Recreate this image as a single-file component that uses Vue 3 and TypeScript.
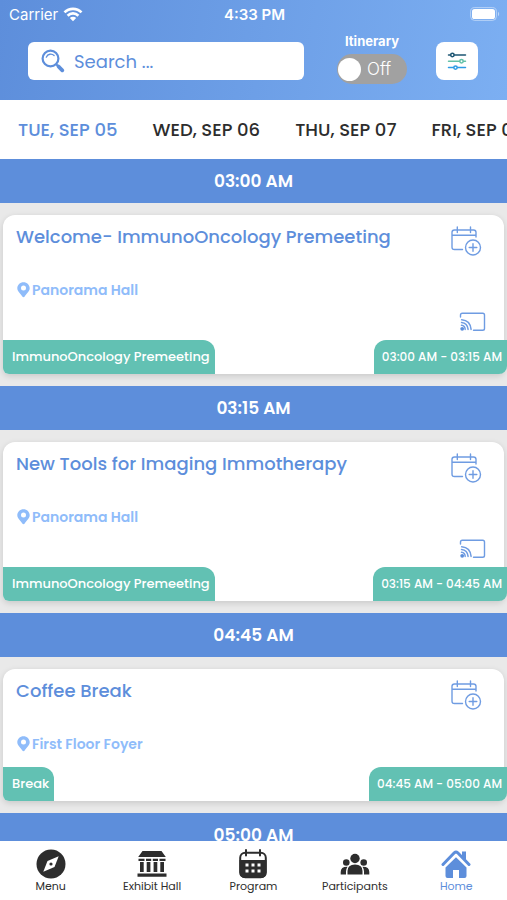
<script setup lang="ts">
import { ref } from 'vue'

interface Session {
  start: string
  title: string
  place: string
  track: string
  time: string
  live: boolean
}

type NavIcon = 'compass' | 'hall' | 'calendar' | 'people' | 'home'

interface NavItem {
  label: string
  icon: NavIcon
}

const days: string[] = ['TUE, SEP 05', 'WED, SEP 06', 'THU, SEP 07', 'FRI, SEP 08']
const activeDay = ref(0)
const query = ref('')
const itinerary = ref(false)
const activeNav = ref('Home')

const sessions: Session[] = [
  {
    start: '03:00 AM',
    title: 'Welcome- ImmunoOncology Premeeting',
    place: 'Panorama Hall',
    track: 'ImmunoOncology Premeeting',
    time: '03:00 AM - 03:15 AM',
    live: true,
  },
  {
    start: '03:15 AM',
    title: 'New Tools for Imaging Immotherapy',
    place: 'Panorama Hall',
    track: 'ImmunoOncology Premeeting',
    time: '03:15 AM - 04:45 AM',
    live: true,
  },
  {
    start: '04:45 AM',
    title: 'Coffee Break',
    place: 'First Floor Foyer',
    track: 'Break',
    time: '04:45 AM - 05:00 AM',
    live: false,
  },
]
const upcoming = '05:00 AM'

const navItems: NavItem[] = [
  { label: 'Menu', icon: 'compass' },
  { label: 'Exhibit Hall', icon: 'hall' },
  { label: 'Program', icon: 'calendar' },
  { label: 'Participants', icon: 'people' },
  { label: 'Home', icon: 'home' },
]
</script>

<template>
  <div class="app">
    <header class="header">
      <div class="status">
        <span class="carrier">
          Carrier
          <svg width="20" height="15" viewBox="0 0 20 15" aria-hidden="true">
            <g fill="none" stroke="#fff" stroke-width="2.7">
              <path d="M1.5 5.4a12 12 0 0 1 17 0" />
              <path d="M4.6 8.7a7.6 7.6 0 0 1 10.8 0" />
            </g>
            <path d="M6.8 11a4.5 4.5 0 0 1 6.4 0L10 14.300z" fill="#fff" />
          </svg>
        </span>
        <span class="clock">4:33 PM</span>
        <span class="battery">
          <svg width="30" height="14" viewBox="0 0 30 14" aria-hidden="true">
            <rect x="0.600" y="0.600" width="25.800" height="12.800" rx="4" fill="none" stroke="#fff" stroke-opacity=".45" />
            <rect x="2" y="2" width="23" height="10" rx="2.600" fill="#fff" />
            <path d="M28 4.800c1.600.8 1.600 3.600 0 4.400z" fill="#fff" fill-opacity=".5" />
          </svg>
        </span>
      </div>
      <div class="tools">
        <label class="search">
          <svg width="24" height="24" viewBox="0 0 24 24" fill="none" stroke="#5d8edb" aria-hidden="true">
            <circle cx="9.500" cy="9.500" r="7.900" stroke-width="2.200" />
            <path d="M5.300 8.200c1.400-3.300 5.300-4 7.800-1.700" stroke-width="1.300" stroke-linecap="round" />
            <path d="M15.200 15.200l2.600 2.600" stroke-width="2" />
            <path d="M17.500 17.500l3.800 3.800" stroke-width="3.800" stroke-linecap="round" />
          </svg>
          <input v-model="query" type="text" placeholder="Search ..." aria-label="Search" />
        </label>
        <label class="itinerary">
          <span class="itinerary-label">Itinerary</span>
          <input v-model="itinerary" type="checkbox" class="switch-input" />
          <span class="switch" :class="{ on: itinerary }">
            <span class="knob"></span>
            <span class="switch-text">{{ itinerary ? 'On' : 'Off' }}</span>
          </span>
        </label>
        <button type="button" class="filter" aria-label="Filters">
          <svg width="20" height="20" viewBox="0 0 20 20" fill="none" stroke-width="1.500" stroke-linecap="round" aria-hidden="true">
            <g stroke="#1d5673"><path d="M1.500 4H3.500M7.300 4h11.200" /><circle cx="5.400" cy="4" r="1.700" /></g>
            <g stroke="#62c1a8"><path d="M1.500 10.300H12.500M16.500 10.300h2" /><circle cx="14.500" cy="10.300" r="1.700" /></g>
            <g stroke="#2d9be4"><path d="M1.500 16.600H6.500M10.500 16.600h8" /><circle cx="8.500" cy="16.600" r="1.700" /></g>
          </svg>
        </button>
      </div>
    </header>

    <nav class="days" aria-label="Days">
      <button
        v-for="(day, i) in days"
        :key="day"
        type="button"
        class="day"
        :class="{ active: i === activeDay }"
        @click="activeDay = i"
      >{{ day }}</button>
    </nav>

    <main class="agenda">
      <section v-for="s in sessions" :key="s.start">
        <h2 class="slot">{{ s.start }}</h2>
        <div class="slot-body">
          <article class="card">
            <div class="card-top">
              <h3 class="title">{{ s.title }}</h3>
              <button type="button" class="icon-button" aria-label="Add to itinerary">
                <svg width="32" height="32" viewBox="0 0 32 32" fill="none" stroke="#6f9ce2" stroke-width="1.400" stroke-linecap="round" aria-hidden="true">
                  <path d="M12.500 25.500H4.500Q2 25.500 2 23V8.300Q2 6 4.500 6H23.500Q26 6 26 8.300V13M2 11.200H26M7.300 3V8.500M20.500 3V8.500" />
                  <circle cx="23" cy="23.500" r="7.500" />
                  <path d="M23 19.700v7.600M19.200 23.500h7.600" />
                </svg>
              </button>
            </div>
            <p class="place">
              <svg width="13" height="17" viewBox="0 0 13 17" aria-hidden="true">
                <path fill-rule="evenodd" fill="#8fbcfa" d="M6.500.2C3 .2.300 2.900.300 6.200c0 3.200 3.400 5.500 5 8.300q1.200 1.600 2.400 0c1.600-2.800 5-5.100 5-8.300C12.700 2.900 10 .2 6.500.2zM6.500 3.500a2.500 2.500 0 1 1 0 5a2.500 2.500 0 0 1 0-5z" />
              </svg>
              {{ s.place }}
            </p>
            <div v-if="s.live" class="cast">
              <button type="button" class="icon-button" aria-label="Watch stream">
                <svg width="27" height="20" viewBox="0 0 27 20" fill="none" stroke="#6f9ce2" stroke-linecap="round" aria-hidden="true">
                  <path d="M1.500 5V3Q1.500 1.200 3.300 1.200H23.700Q25.500 1.200 25.500 3V16.500Q25.500 18.300 23.700 18.300H14.500" stroke-width="1.400" />
                  <path d="M2.500 13.200q3.500.3 3.700 4.200M2.500 10.400q6 .5 6.600 7M2.700 7.700q8.600.6 9.400 9.700" stroke-width="1.500" />
                  <circle cx="3.200" cy="16.800" r="1.900" fill="#5d8edb" stroke="none" />
                </svg>
              </button>
            </div>
            <footer class="tags">
              <span class="tag track">{{ s.track }}</span>
              <time class="tag time">{{ s.time }}</time>
            </footer>
          </article>
        </div>
      </section>
      <section>
        <h2 class="slot">{{ upcoming }}</h2>
      </section>
    </main>

    <nav class="tabbar" aria-label="Main">
      <a
        v-for="item in navItems"
        :key="item.label"
        href="#"
        class="tab"
        :class="{ active: item.label === activeNav }"
        @click.prevent="activeNav = item.label"
      >
        <svg v-if="item.icon === 'compass'" width="30" height="30" viewBox="0 0 30 30" aria-hidden="true">
          <circle cx="15" cy="15" r="14.500" fill="currentColor" />
          <path d="M22.700 7.300L18.500 18L7.300 22.700L11.500 12z" fill="#fff" />
          <circle cx="15" cy="15" r="1.600" fill="currentColor" />
        </svg>
        <svg v-else-if="item.icon === 'hall'" width="30" height="30" viewBox="0 0 30 30" fill="currentColor" aria-hidden="true">
          <path d="M5.500 2h19l4.300 6H1.200zM.500 24.500h29v3.300H.500z" />
          <path d="M1.500 9.700h6v2.200h-6zM9 9.700h5.200v2.200H9zM15.800 9.700H21v2.200h-5.200zM22.500 9.700h6v2.200h-6z" />
          <path d="M3 13h3.700v10H3zM9.700 13h3.700v10H9.700zM16.600 13h3.700v10h-3.700zM23.300 13H27v10h-3.700z" />
        </svg>
        <svg v-else-if="item.icon === 'calendar'" width="30" height="30" viewBox="0 0 30 30" aria-hidden="true">
          <rect x="2.200" y="3.800" width="25.600" height="24.400" rx="5" fill="#fff" stroke="currentColor" stroke-width="2" />
          <path d="M1.500 11h27v12q0 6-6 6h-15q-6 0-6-6z" fill="currentColor" />
          <path d="M8 1v5.500M22 1v5.500" stroke="currentColor" stroke-width="2" stroke-linecap="round" />
          <path d="M7.500 16h3M13.500 16h3M19.500 16h3M7.500 22h3M13.500 22h3M19.500 22h3" stroke="#fff" stroke-width="2.800" />
        </svg>
        <svg v-else-if="item.icon === 'people'" width="30" height="30" viewBox="0 0 30 30" fill="currentColor" aria-hidden="true">
          <circle cx="15" cy="9.500" r="4.700" />
          <circle cx="6.300" cy="13.500" r="3.300" />
          <circle cx="23.700" cy="13.500" r="3.300" />
          <path d="M7.500 25.500V22q0-6.500 7.500-6.500t7.500 6.500v3.500zM.700 25.500V23q0-5.500 6.800-5.300Q6 20 6 22.500v3zM29.300 25.500V23q0-5.500-6.800-5.300Q24 20 24 22.500v3z" />
        </svg>
        <svg v-else width="30" height="30" viewBox="0 0 30 30" fill="currentColor" aria-hidden="true">
          <path d="M2 15.500L13.300 3.800q1.700-1.600 3.400 0L28 15.500" fill="none" stroke="currentColor" stroke-width="3" stroke-linecap="round" stroke-linejoin="round" />
          <path d="M21 2.500h4v8.500l-4-4zM15 8.200L25.500 18.500V27q0 2-2 2H18v-8h-6v8H6.500q-2 0-2-2v-8.500z" />
        </svg>
        <span>{{ item.label }}</span>
      </a>
    </nav>
  </div>
</template>

<style>
body {
  margin: 0;
}
</style>

<style scoped>
.app {
  --blue: #5d8edb;
  --green: #62c1b3;
  display: flex;
  flex-direction: column;
  height: 100vh;
  overflow: hidden;
  background: #e9e9e9;
  color: #2d2d2d;
  font-family: Poppins, Inter, sans-serif;
}

button,
input {
  margin: 0;
  border: 0;
  padding: 0;
  background: none;
  font: inherit;
  color: inherit;
}

button {
  cursor: pointer;
}

svg {
  display: block;
  flex: none;
}

.header {
  flex: none;
  padding-bottom: 16px;
  background: linear-gradient(100deg, #5d8edb, #7caff2);
  color: #fff;
}

.status {
  display: grid;
  grid-template-columns: 1fr auto 1fr;
  align-items: center;
  height: 28px;
  padding: 0 7px 0 9px;
  font-family: Inter, sans-serif;
  font-size: 15px;
}

.carrier {
  display: flex;
  align-items: center;
  gap: 5px;
}

.clock {
  font-weight: 600;
}

.battery {
  justify-self: end;
}

.tools {
  display: flex;
  align-items: flex-end;
  height: 56px;
  padding: 0 29px 0 28px;
}

.search {
  display: flex;
  flex: 1;
  align-items: center;
  gap: 9px;
  box-sizing: border-box;
  min-width: 0;
  height: 38px;
  margin-bottom: 4px;
  padding: 0 13px;
  border-radius: 6px;
  background: #fff;
}

.search input {
  flex: 1;
  width: 100%;
  min-width: 0;
  outline: none;
  color: var(--blue);
  font-size: 18px;
}

.search input::placeholder {
  color: var(--blue);
  opacity: 1;
}

.itinerary {
  position: relative;
  display: flex;
  flex: none;
  flex-direction: column;
  align-items: center;
  gap: 4px;
  margin: 0 29px 0 33px;
  font-family: Inter, sans-serif;
  cursor: pointer;
}

.itinerary-label {
  font-size: 13px;
  font-weight: 700;
  line-height: 18px;
}

.switch-input {
  position: absolute;
  opacity: 0;
}

.switch {
  display: flex;
  align-items: center;
  gap: 6px;
  box-sizing: border-box;
  width: 70px;
  height: 30px;
  padding: 0 1px;
  border-radius: 15px;
  background: #a1a1a1;
}

.switch.on {
  flex-direction: row-reverse;
  background: var(--green);
}

.knob {
  width: 23px;
  height: 23px;
  border-radius: 50%;
  background: #fff;
}

.switch-text {
  font-size: 17px;
  font-weight: 300;
}

.filter {
  display: grid;
  flex: none;
  place-items: center;
  width: 42px;
  height: 38px;
  margin-bottom: 4px;
  border-radius: 8px;
  background: #fff;
}

.days {
  display: flex;
  flex: none;
  gap: 35px;
  height: 59px;
  padding-left: 18px;
  overflow: hidden;
  background: #fff;
}

.day {
  flex: none;
  font-size: 18px;
  font-weight: 500;
  white-space: nowrap;
}

.day.active {
  color: var(--blue);
}

.agenda {
  flex: 1;
  min-height: 0;
  overflow-y: auto;
  scrollbar-width: none;
}

.slot {
  margin: 0;
  background: var(--blue);
  color: #fff;
  font-size: 17px;
  font-weight: 600;
  line-height: 44px;
  text-align: center;
}

.slot-body {
  padding: 12px 3px;
}

.card {
  border-radius: 12px 12px 6px 6px;
  background: #fff;
  box-shadow: 0 2px 6px rgba(0, 0, 0, 0.14);
}

.card-top {
  display: flex;
  justify-content: space-between;
  height: 65px;
  box-sizing: border-box;
  padding: 9px 22px 0 13px;
}

.title {
  margin: 0;
  color: var(--blue);
  font-size: 18px;
  font-weight: 500;
  line-height: 26px;
}

.icon-button {
  align-self: flex-start;
}

.place {
  display: flex;
  align-items: center;
  gap: 2px;
  height: 20px;
  margin: 0;
  padding-left: 14px;
  color: #8fbcfa;
  font-size: 14px;
  font-weight: 600;
}

.cast {
  display: flex;
  justify-content: flex-end;
  height: 27px;
  padding: 12px 18px 0 0;
  box-sizing: border-box;
}

.tags {
  display: flex;
  align-items: flex-end;
  justify-content: space-between;
  height: 47px;
  margin-right: -3px;
}

.tag {
  padding: 0 5px 0 8px;
  background: var(--green);
  color: #fff;
  font-size: 12px;
  font-weight: 500;
  line-height: 34px;
}

.track {
  padding-left: 9px;
  border-radius: 0 12px 0 6px;
  font-size: 13px;
}

.time {
  border-radius: 12px 0 8px 0;
}

.tabbar {
  display: grid;
  flex: none;
  grid-template-columns: repeat(5, 1fr);
  height: 59px;
  background: #fff;
}

.tab {
  display: flex;
  flex-direction: column;
  align-items: center;
  padding-top: 8px;
  color: #2d2d2d;
  font-size: 11px;
  line-height: 14px;
  text-decoration: none;
}

.tab.active {
  color: var(--blue);
}
</style>
